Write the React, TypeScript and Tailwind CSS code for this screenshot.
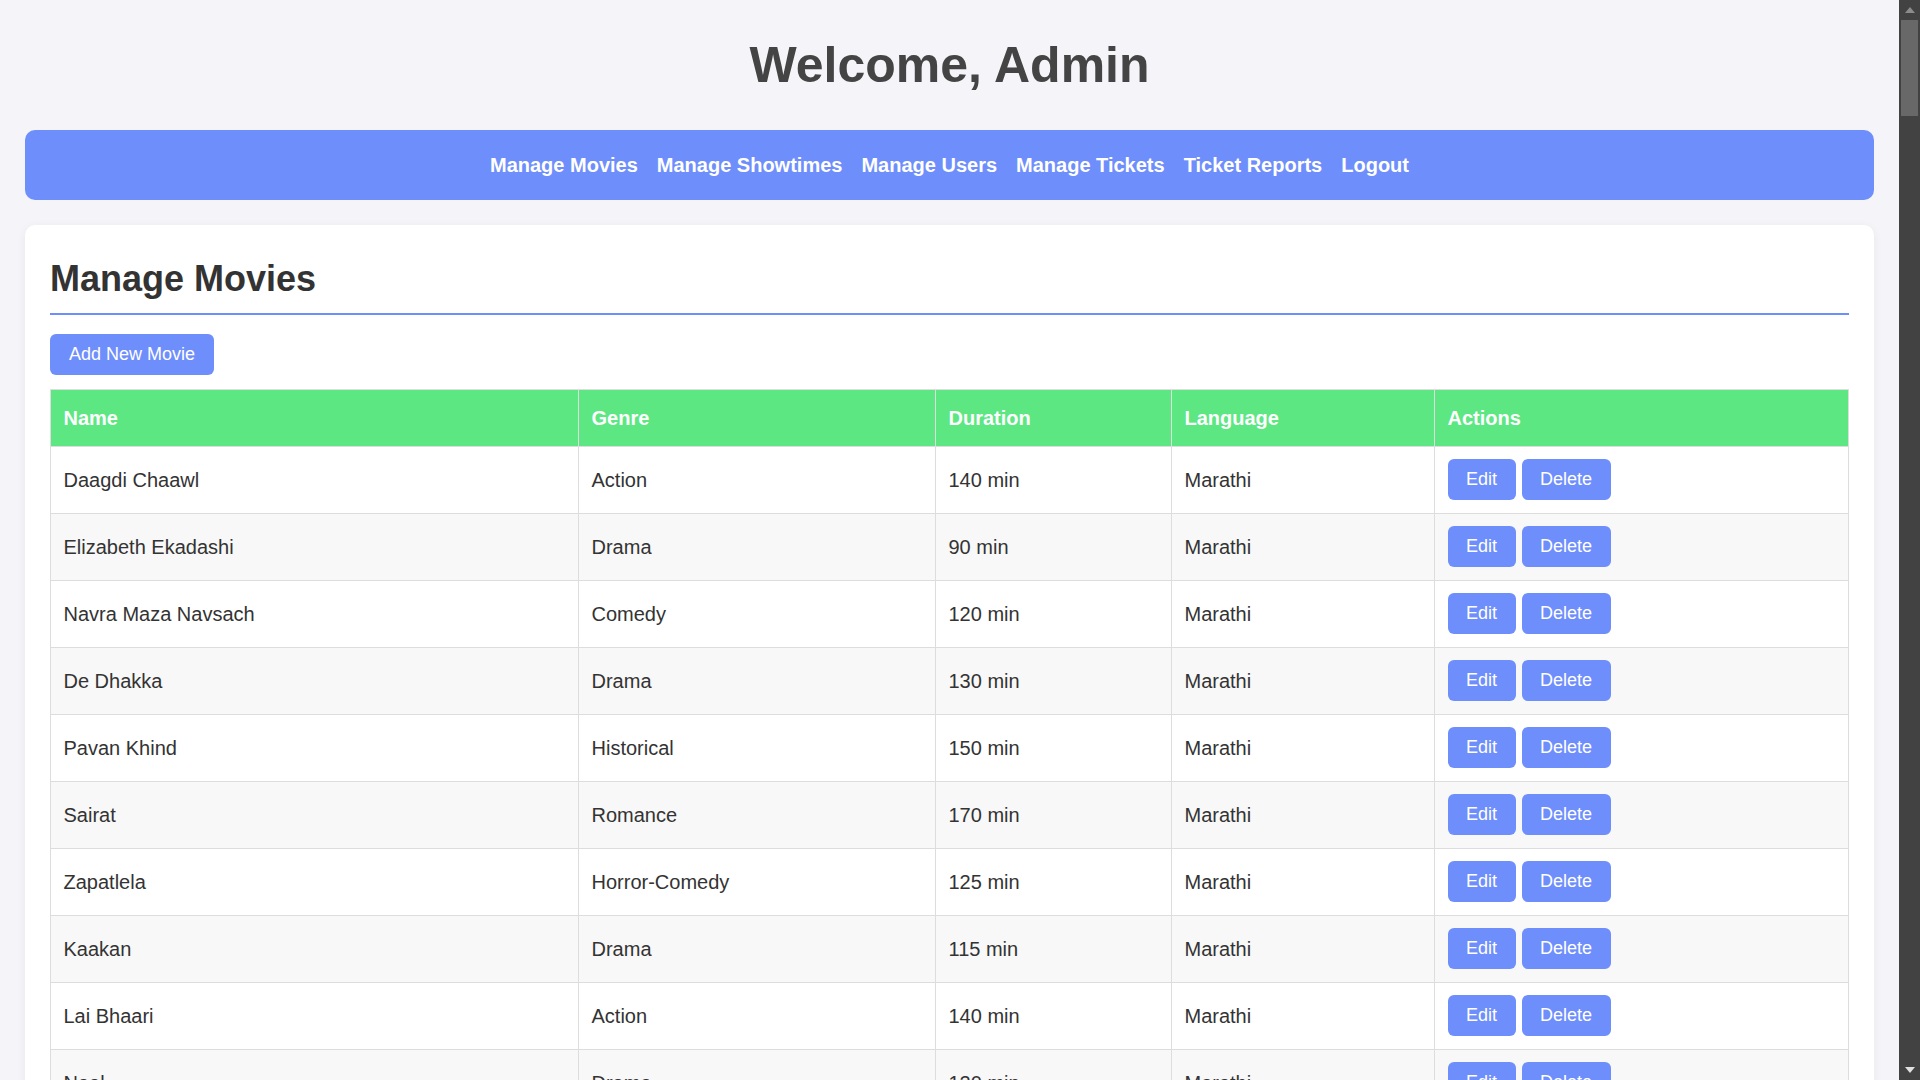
import React from 'react';

const movies = [
  { name: 'Daagdi Chaawl', genre: 'Action', duration: '140 min', language: 'Marathi' },
  { name: 'Elizabeth Ekadashi', genre: 'Drama', duration: '90 min', language: 'Marathi' },
  { name: 'Navra Maza Navsach', genre: 'Comedy', duration: '120 min', language: 'Marathi' },
  { name: 'De Dhakka', genre: 'Drama', duration: '130 min', language: 'Marathi' },
  { name: 'Pavan Khind', genre: 'Historical', duration: '150 min', language: 'Marathi' },
  { name: 'Sairat', genre: 'Romance', duration: '170 min', language: 'Marathi' },
  { name: 'Zapatlela', genre: 'Horror-Comedy', duration: '125 min', language: 'Marathi' },
  { name: 'Kaakan', genre: 'Drama', duration: '115 min', language: 'Marathi' },
  { name: 'Lai Bhaari', genre: 'Action', duration: '140 min', language: 'Marathi' },
  { name: 'Naal', genre: 'Drama', duration: '120 min', language: 'Marathi' },
  { name: 'Timepass', genre: 'Romance', duration: '135 min', language: 'Marathi' },
];

const links = ['Manage Movies', 'Manage Showtimes', 'Manage Users', 'Manage Tickets', 'Ticket Reports', 'Logout'];

function ActionButton({ children }: { children: React.ReactNode }) {
  return (
    <button className="h-[41px] px-[18.5px] rounded-[6px] bg-[#6e8efb] text-white text-[18px] leading-[21px] cursor-pointer">
      {children}
    </button>
  );
}

function Scrollbar() {
  return (
    <div className="w-[21px] shrink-0 h-screen bg-[#424242] flex flex-col items-center">
      <div className="h-[20px] w-full flex items-center justify-center">
        <svg width="10" height="6" viewBox="0 0 10 6">
          <path d="M5 0 L10 6 L0 6 Z" fill="#8c8c8c" />
        </svg>
      </div>
      <div className="w-[17px] h-[96px] bg-[#686868]" />
      <div className="flex-1" />
      <div className="h-[20px] w-full flex items-center justify-center">
        <svg width="10" height="6" viewBox="0 0 10 6">
          <path d="M0 0 L10 0 L5 6 Z" fill="#e0e0e0" />
        </svg>
      </div>
    </div>
  );
}

export default function App() {
  return (
    <div className="flex h-screen w-full overflow-hidden bg-[#f4f4f9] font-['Liberation_Sans',Arial,sans-serif]">
      <div className="flex-1 min-w-0 px-[25px]">
        {/* Header */}
        <h1 className="mt-[36px] mb-[36px] text-center text-[50px] leading-[58px] font-bold text-[#444]">
          Welcome, Admin
        </h1>

        {/* Nav */}
        <nav className="h-[70px] rounded-[10px] bg-[#6e8efb] flex items-center justify-center gap-[19px]">
          {links.map((l) => (
            <a key={l} href="#" className="text-white font-bold text-[20px] leading-[23px]">
              {l}
            </a>
          ))}
        </nav>

        {/* Card */}
        <section className="mt-[25px] bg-white rounded-[10px] p-[25px] shadow-[0_2px_10px_rgba(0,0,0,0.06)]">
          <h2 className="mt-[8px] pb-[14px] border-b-2 border-[#6e8efb] text-[36px] leading-[41px] font-bold text-[#333]">
            Manage Movies
          </h2>

          <button className="mt-[19px] h-[41px] px-[19px] rounded-[6px] bg-[#6e8efb] text-white text-[18px] leading-[21px]">
            Add New Movie
          </button>

          <table className="mt-[13.5px] w-full table-fixed border-collapse text-[20px] text-[#333]">
            <colgroup>
              <col className="w-[528px]" />
              <col className="w-[357px]" />
              <col className="w-[236px]" />
              <col className="w-[263px]" />
              <col />
            </colgroup>
            <thead>
              <tr className="bg-[#5ce782]">
                {['Name', 'Genre', 'Duration', 'Language', 'Actions'].map((h) => (
                  <th
                    key={h}
                    className="h-[57px] px-[12.5px] border border-[#ddd] text-left text-white font-bold align-middle"
                  >
                    {h}
                  </th>
                ))}
              </tr>
            </thead>
            <tbody>
              {movies.map((m, i) => (
                <tr key={m.name} className={i % 2 === 1 ? 'bg-[#f8f8f8]' : 'bg-white'}>
                  <td className="h-[67px] px-[12.5px] border border-[#ddd] align-middle">{m.name}</td>
                  <td className="px-[12.5px] border border-[#ddd] align-middle">{m.genre}</td>
                  <td className="px-[12.5px] border border-[#ddd] align-middle">{m.duration}</td>
                  <td className="px-[12.5px] border border-[#ddd] align-middle">{m.language}</td>
                  <td className="px-[12.5px] border border-[#ddd] align-middle">
                    <div className="flex gap-[6px]">
                      <ActionButton>Edit</ActionButton>
                      <ActionButton>Delete</ActionButton>
                    </div>
                  </td>
                </tr>
              ))}
            </tbody>
          </table>
        </section>
      </div>
      <Scrollbar />
    </div>
  );
}
